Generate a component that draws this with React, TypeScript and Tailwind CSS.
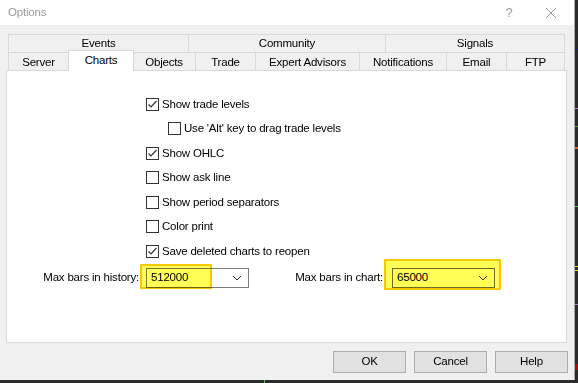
import React from "react";

const font = { fontFamily: '"Liberation Sans", Arial, sans-serif', letterSpacing: "-0.2px" };

function Check({ checked }: { checked?: boolean }) {
  return (
    <div className="w-[13px] h-[13px] border border-[#333333] bg-white flex items-center justify-center shrink-0">
      {checked && (
        <svg width="11" height="11" viewBox="0 0 11 11">
          <polyline points="1.5,5.5 4,8 9.5,2" fill="none" stroke="#333333" strokeWidth="1.2" />
        </svg>
      )}
    </div>
  );
}

function Row({ label, checked, indent }: { label: string; checked?: boolean; indent?: boolean }) {
  return (
    <div className={`h-[24.5px] flex items-center gap-[3px] ${indent ? "pl-[22px]" : ""}`}>
      <Check checked={checked} />
      <span className="text-[11.5px] text-black leading-none">{label}</span>
    </div>
  );
}

function Chevron() {
  return (
    <svg width="10" height="6" viewBox="0 0 10 6">
      <polyline points="1,1 5,5 9,1" fill="none" stroke="#333" strokeWidth="1" />
    </svg>
  );
}

export default function App() {
  const row2 = [
    ["Server", 60],
    ["Charts", 64],
    ["Objects", 63],
    ["Trade", 60],
    ["Expert Advisors", 104],
    ["Notifications", 87],
    ["Email", 60],
    ["FTP", 58],
  ] as const;
  const row1 = [
    ["Events", 180],
    ["Community", 197],
    ["Signals", 179],
  ] as const;
  return (
    <div className="w-[578px] h-[383px] bg-[#2b2b2b] relative overflow-hidden" style={font}>
      {/* dialog */}
      <div className="w-[575px] h-[380px] bg-[#f0f0f0] flex flex-col border-r border-[#aaaaaa]">
        {/* title bar */}
        <div className="h-[25px] bg-white flex items-center shrink-0">
          <span className="pl-[8px] pt-[1px] text-[11.5px] text-[#9a9a9a] flex-1">Options</span>
          <span className="text-[13px] text-[#9a9a9a] w-[20px] text-center mr-[26px]">?</span>
          <svg width="12" height="12" viewBox="0 0 12 12" className="mr-[17px]">
            <path d="M1 1L11 11M11 1L1 11" stroke="#999999" strokeWidth="1" />
          </svg>
        </div>
        {/* tabs */}
        <div className="pl-[8px] pt-[9px] flex flex-col">
          <div className="flex h-[18px] border-l border-[#d9d9d9]">
            {row1.map(([t, w]) => (
              <div
                key={t}
                style={{ width: w }}
                className="border-t border-r border-[#d9d9d9] text-[11.5px] text-black flex items-center justify-center leading-none pt-[1px]"
              >
                {t}
              </div>
            ))}
          </div>
          <div className="flex h-[18px] border-l border-[#d9d9d9]">
            {row2.map(([t, w]) =>
              t === "Charts" ? (
                <div
                  key={t}
                  style={{ width: w + 2 }}
                  className="-mx-[1px] -mt-[2px] h-[21px] relative z-10 bg-white border-t border-l border-r border-[#d9d9d9] text-[11.5px] text-black flex justify-center pt-[4px] leading-none"
                >
                  {t}
                </div>
              ) : (
                <div
                  key={t}
                  style={{ width: w }}
                  className="border-t border-r border-[#d9d9d9] text-[11.5px] text-black flex items-center justify-center leading-none pt-[2px]"
                >
                  {t}
                </div>
              )
            )}
          </div>
        </div>
        {/* panel */}
        <div className="ml-[6px] w-[561px] h-[273px] bg-white border border-[#d9d9d9] flex flex-col">
          <div className="pl-[139px] pt-[21px] flex flex-col">
            <Row label="Show trade levels" checked />
            <Row label="Use 'Alt' key to drag trade levels" indent />
            <Row label="Show OHLC" checked />
            <Row label="Show ask line" />
            <Row label="Show period separators" />
            <Row label="Color print" />
            <Row label="Save deleted charts to reopen" checked />
          </div>
          <div className="flex items-center mt-[4px] h-[20px]">
            <div className="w-[132px] text-right text-[11.5px] text-black">Max bars in history:</div>
            <div className="relative ml-[7px] w-[103px] h-[20px]">
              <div className="w-full h-full bg-white border border-[#7a7a7a] flex items-center justify-between pl-[4px] pr-[6px]">
                <span className="text-[11.5px] text-black">512000</span>
                <Chevron />
              </div>
              <div className="absolute -left-[6px] -top-[4px] w-[72px] h-[25px] bg-[#ffff55] mix-blend-multiply border-2 border-[#f5c800] rounded-[1px]" />
            </div>
            <div className="w-[134px] text-right text-[11.5px] text-black">Max bars in chart:</div>
            <div className="relative ml-[9px] w-[103px] h-[20px]">
              <div className="w-full h-full bg-white border border-[#6b6b6b] flex items-center justify-between pl-[4px] pr-[6px]">
                <span className="text-[11.5px] text-black">65000</span>
                <Chevron />
              </div>
              <div className="absolute -left-[8px] -top-[9px] w-[117px] h-[31px] bg-[#ffff55] mix-blend-multiply border-2 border-[#f5c800] rounded-[1px]" />
            </div>
          </div>
        </div>
        {/* buttons */}
        <div className="flex justify-end gap-[8px] pr-[6px] pt-[8px]">
          {["OK", "Cancel", "Help"].map((b) => (
            <div
              key={b}
              className="w-[73px] h-[22px] bg-[#e1e1e1] border border-[#adadad] flex items-center justify-center text-[11.5px] text-black"
            >
              {b}
            </div>
          ))}
        </div>
      </div>
      {/* background chart marks at right edge */}
      <div className="absolute right-0 top-0 w-[3px] h-[380px]">
        <div className="absolute top-[49px] w-[3px] h-[1px] bg-[#1a1a80]" />
        <div className="absolute top-[108px] w-[3px] h-[1px] bg-[#a080c0]" />
        <div className="absolute top-[126px] w-[3px] h-[1px] bg-[#60a040]" />
        <div className="absolute top-[147px] w-[3px] h-[2px] bg-[#e06030]" />
        <div className="absolute top-[206px] w-[3px] h-[1px] bg-[#60c060]" />
        <div className="absolute top-[266px] w-[3px] h-[1px] bg-[#e0e000]" />
        <div className="absolute top-[270px] w-[3px] h-[1px] bg-[#e0e000]" />
        <div className="absolute top-[304px] w-[3px] h-[1px] bg-[#a080c0]" />
        <div className="absolute top-[364px] w-[3px] h-[6px] bg-[#a01010]" />
      </div>
      <div className="absolute left-[264px] bottom-0 w-[1px] h-[3px] bg-[#60c060]" />
    </div>
  );
}
